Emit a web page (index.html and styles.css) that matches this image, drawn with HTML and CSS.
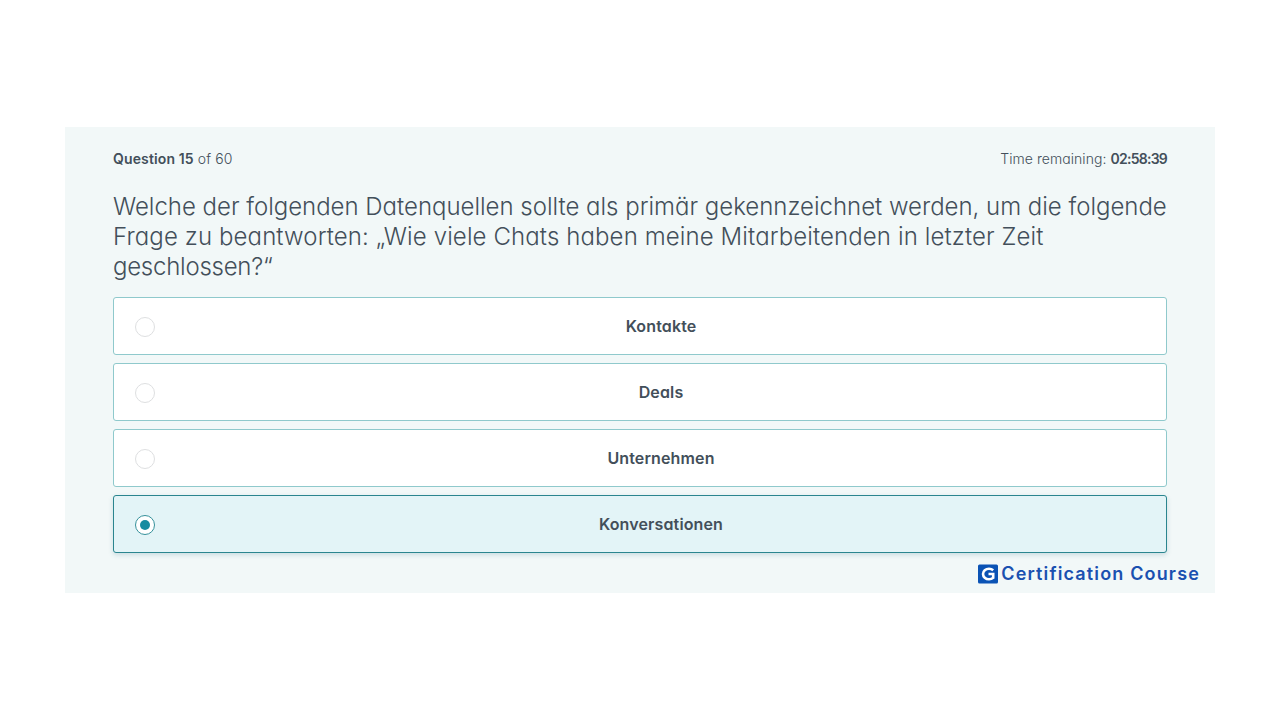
FILE: index.html
```html
<!DOCTYPE html>
<html lang="de">
<head>
    <meta charset="UTF-8">
    <meta name="viewport" content="width=device-width, initial-scale=1.0">
    <title>Certification Course</title>
    <link rel="stylesheet" href="styles.css">
</head>
<body>
    <main class="quiz">
        <header class="quiz-header">
            <div class="progress"><strong>Question 15</strong> of 60</div>
            <div class="timer">Time remaining: <strong>02:58:39</strong></div>
        </header>

        <h1 class="question">
            <span class="line line-1">Welche der folgenden Datenquellen sollte als primär gekennzeichnet werden, um die folgende</span>
            <span class="line line-2">Frage zu beantworten: „Wie viele Chats haben meine Mitarbeitenden in letzter Zeit</span>
            <span class="line line-3">geschlossen?“</span>
        </h1>

        <div class="answers">
            <label class="answer">
                <input type="radio" name="answer">
                <span class="answer-text">Kontakte</span>
            </label>
            <label class="answer">
                <input type="radio" name="answer">
                <span class="answer-text">Deals</span>
            </label>
            <label class="answer">
                <input type="radio" name="answer">
                <span class="answer-text">Unternehmen</span>
            </label>
            <label class="answer selected">
                <input type="radio" name="answer" checked>
                <span class="answer-text">Konversationen</span>
            </label>
        </div>

        <footer class="brand">
            <svg class="brand-icon" viewBox="0 0 20 20" width="20" height="20">
                <rect width="20" height="19" y="0.5" rx="1.5" fill="#0b53b5"/>
                <path d="M15.2 6.2A6 5.3 0 1 0 15.2 13.8V10H10.5" fill="none" stroke="#fff" stroke-width="2.6"/>
            </svg>
            <span class="brand-name">Certification Course</span>
        </footer>
    </main>
</body>
</html>
```
FILE: styles.css
```css
* {
    box-sizing: border-box;
}
body {
    margin: 0;
    padding: 127px 65px;
    background: #fff;
    color: #434f5a;
    font-family: "Inter", "Lato", sans-serif;
    font-feature-settings: "cv11";
}
.quiz {
    height: 466px;
    padding: 22px 48px 0;
    background: #f2f8f8;
}
.quiz-header {
    display: flex;
    justify-content: space-between;
    height: 20px;
    font-size: 14px;
    line-height: 20px;
    font-weight: 300;
    white-space: nowrap;
}
.quiz-header strong {
    font-weight: 600;
}
.progress {
    letter-spacing: 0.13px;
}
.timer {
    letter-spacing: 0.06px;
}
.timer strong {
    letter-spacing: -0.75px;
}
.question {
    margin: 23px 0 15px;
    font-size: 24px;
    line-height: 30px;
    font-weight: 300;
}
.line {
    display: block;
    width: max-content;
    white-space: nowrap;
}
.line-1 {
    letter-spacing: -0.015px;
}
.line-2 {
    letter-spacing: 0.11px;
}
.line-3 {
    letter-spacing: -0.25px;
}
.answers {
    display: grid;
    gap: 8px;
}
.answer {
    display: flex;
    align-items: center;
    height: 58px;
    padding: 0 21px;
    background: #fff;
    border: 1px solid #8fc9cc;
    border-radius: 3px;
    cursor: pointer;
}
.answer input {
    appearance: none;
    display: grid;
    place-items: center;
    flex: none;
    width: 20px;
    height: 20px;
    margin: 2px 0 0;
    background: #fff;
    border: 1px solid #dedfe1;
    border-radius: 50%;
}
.answer-text {
    flex: 1;
    padding-left: 22px;
    text-align: center;
    font-size: 16px;
    font-weight: 600;
    letter-spacing: 0.13px;
}
.answer.selected {
    background: #e3f4f7;
    border-color: #2a858f;
    box-shadow: 0 2px 5px rgba(40, 110, 130, 0.2);
}
.answer.selected input {
    border-color: #36919b;
}
.answer.selected input::before {
    content: "";
    width: 10px;
    height: 10px;
    background: #168ba0;
    border-radius: 50%;
}
.brand {
    display: flex;
    align-items: center;
    justify-content: flex-end;
    gap: 3px;
    height: 20px;
    margin: 11px -33px 0 0;
    color: #1a50b0;
    font-size: 18px;
    font-weight: 600;
    font-feature-settings: normal;
    letter-spacing: 1.15px;
    white-space: nowrap;
}
.brand-name {
    padding-bottom: 1px;
}
```
